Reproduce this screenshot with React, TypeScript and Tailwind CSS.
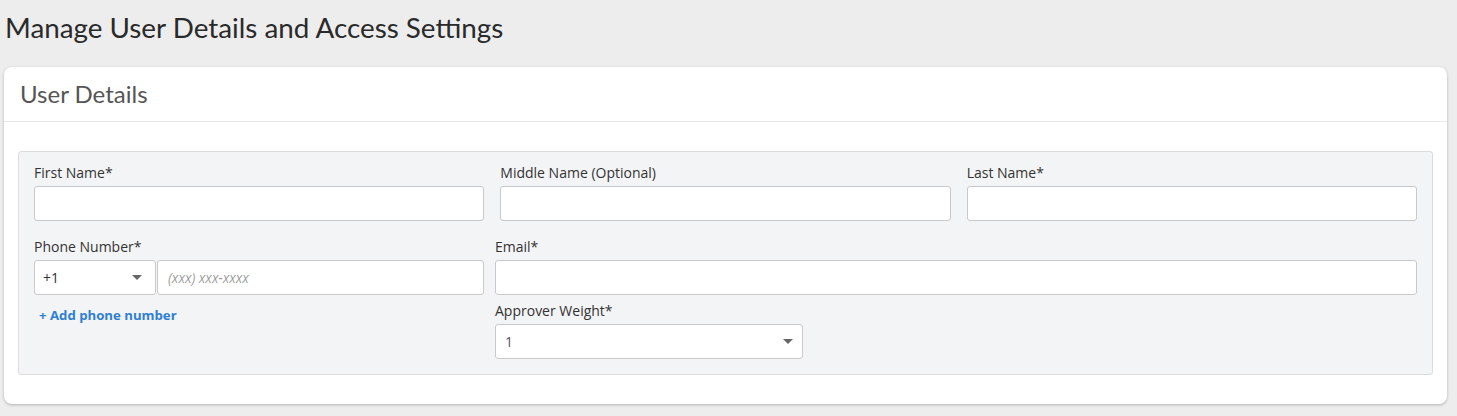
import { useState } from "react";

const Caret = () => (
  <svg width="10" height="6" viewBox="0 0 10 6" className="shrink-0">
    <path d="M0 0 L10 0 L5 5 Z" fill="#666" />
  </svg>
);

const Field = ({ label, children }: { label: string; children: React.ReactNode }) => (
  <div className="flex flex-col">
    <label className="text-[14px] leading-[18px] text-[#333] mb-[4px] pt-[1px]">{label}</label>
    {children}
  </div>
);

const inputCls =
  "h-[35px] w-full rounded-[3px] border border-[#c9c9c9] bg-white px-[10px] text-[13.6px] text-[#333] outline-none";

const App = () => {
  const [code] = useState("+1");

  return (
    <div
      className="min-h-[416px] bg-[#ededed] px-[4px] pt-[10px]"
      style={{ fontFamily: "'Open Sans', 'Liberation Sans', sans-serif" }}
    >
      <h1
        className="pl-[1px] text-[27.8px] leading-[36px] text-[#2a2a2a]"
        style={{ fontFamily: "Lato, 'Liberation Sans', sans-serif" }}
      >
        Manage User Details and Access Settings
      </h1>

      <div className="mt-[21px] mr-[6px] rounded-[8px] bg-white shadow-[0_1px_3px_rgba(0,0,0,0.25)]">
        <div className="flex h-[55px] items-center border-b border-[#e6e6e6] px-[16px]">
          <h2
            className="text-[24px] text-[#555]"
            style={{ fontFamily: "Lato, 'Liberation Sans', sans-serif" }}
          >
            User Details
          </h2>
        </div>

        <div className="px-[14px] pt-[29px] pb-[29px]">
          <div className="rounded-[3px] border border-[#dcdcdc] bg-[#f3f4f6] px-[15px] pt-[11px] pb-[15px]">
            <div className="grid grid-cols-3 gap-x-[16px]">
              <Field label="First Name*">
                <input className={inputCls} />
              </Field>
              <Field label="Middle Name (Optional)">
                <input className={inputCls} />
              </Field>
              <Field label="Last Name*">
                <input className={inputCls} />
              </Field>
            </div>

            <div className="mt-[16px] flex gap-[11px]">
              <div className="w-[450px] shrink-0">
                <Field label="Phone Number*">
                  <div className="flex gap-[1px]">
                    <div className="flex h-[35px] w-[122px] shrink-0 items-center justify-between rounded-[3px] border border-[#c9c9c9] bg-white pl-[8px] pr-[13px] text-[14px] text-[#333]">
                      <span>{code}</span>
                      <Caret />
                    </div>
                    <input className={inputCls} placeholder="(xxx) xxx-xxxx" style={{ fontStyle: "italic" }} />
                  </div>
                </Field>
                <a className="mt-[11px] block pl-[5px] text-[13.2px] font-bold text-[#2f7fd3]" href="#">
                  + Add phone number
                </a>
              </div>

              <div className="flex-1">
                <Field label="Email*">
                  <input className={inputCls} />
                </Field>
                <div className="mt-[6px] w-[308px]">
                  <Field label="Approver Weight*">
                    <div className="flex h-[35px] items-center justify-between rounded-[3px] border border-[#c9c9c9] bg-white pl-[9px] pr-[9px] text-[14px] text-[#555]">
                      <span>1</span>
                      <Caret />
                    </div>
                  </Field>
                </div>
              </div>
            </div>
          </div>
        </div>
      </div>
    </div>
  );
};

export default App;
